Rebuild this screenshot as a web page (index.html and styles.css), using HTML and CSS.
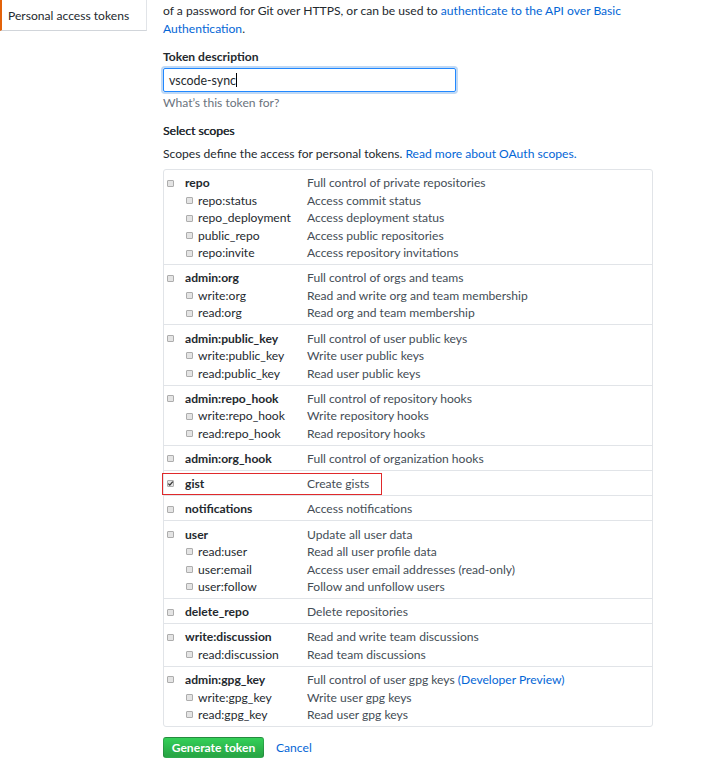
FILE: index.html
```html
<!DOCTYPE html>
<html>
<head>
<meta charset="utf-8">
<title>New personal access token</title>
<link rel="stylesheet" href="styles.css">
</head>
<body>
<div class="page">
  <nav class="sidebar">
    <a class="nav-item selected" href="#">Personal access tokens</a>
  </nav>
  <main class="main">
    <p class="intro">of a password for Git over HTTPS, or can be used to <a href="#">authenticate to the API over Basic<br>Authentication</a>.</p>

    <label class="field-label" for="desc">Token description</label>
    <div class="input"><span class="input-text">vscode-sync</span><span class="caret"></span></div>
    <p class="hint">What’s this token for?</p>

    <h3 class="field-label scopes-title">Select scopes</h3>
    <p class="scopes-note">Scopes define the access for personal tokens. <a href="#">Read more about OAuth scopes.</a></p>

    <div class="scopes">
      <div class="group">
        <div class="row top"><span class="name"><span class="cb"></span><b>repo</b></span><span class="desc">Full control of private repositories</span></div>
        <div class="row sub"><span class="name"><span class="cb"></span>repo:status</span><span class="desc">Access commit status</span></div>
        <div class="row sub"><span class="name"><span class="cb"></span>repo_deployment</span><span class="desc">Access deployment status</span></div>
        <div class="row sub"><span class="name"><span class="cb"></span>public_repo</span><span class="desc">Access public repositories</span></div>
        <div class="row sub"><span class="name"><span class="cb"></span>repo:invite</span><span class="desc">Access repository invitations</span></div>
      </div>
      <div class="group">
        <div class="row top"><span class="name"><span class="cb"></span><b>admin:org</b></span><span class="desc">Full control of orgs and teams</span></div>
        <div class="row sub"><span class="name"><span class="cb"></span>write:org</span><span class="desc">Read and write org and team membership</span></div>
        <div class="row sub"><span class="name"><span class="cb"></span>read:org</span><span class="desc">Read org and team membership</span></div>
      </div>
      <div class="group">
        <div class="row top"><span class="name"><span class="cb"></span><b>admin:public_key</b></span><span class="desc">Full control of user public keys</span></div>
        <div class="row sub"><span class="name"><span class="cb"></span>write:public_key</span><span class="desc">Write user public keys</span></div>
        <div class="row sub"><span class="name"><span class="cb"></span>read:public_key</span><span class="desc">Read user public keys</span></div>
      </div>
      <div class="group">
        <div class="row top"><span class="name"><span class="cb"></span><b>admin:repo_hook</b></span><span class="desc">Full control of repository hooks</span></div>
        <div class="row sub"><span class="name"><span class="cb"></span>write:repo_hook</span><span class="desc">Write repository hooks</span></div>
        <div class="row sub"><span class="name"><span class="cb"></span>read:repo_hook</span><span class="desc">Read repository hooks</span></div>
      </div>
      <div class="group">
        <div class="row top"><span class="name"><span class="cb"></span><b>admin:org_hook</b></span><span class="desc">Full control of organization hooks</span></div>
      </div>
      <div class="group highlighted">
        <span class="highlight-box"></span>
        <div class="row top"><span class="name"><span class="cb checked"><svg viewBox="0 0 7 7" width="7" height="7"><path d="M1.3 3.6 L2.8 5.1 L5.8 1.6" fill="none" stroke="#333" stroke-width="1.3"/></svg></span><b>gist</b></span><span class="desc">Create gists</span></div>
      </div>
      <div class="group">
        <div class="row top"><span class="name"><span class="cb"></span><b>notifications</b></span><span class="desc">Access notifications</span></div>
      </div>
      <div class="group">
        <div class="row top"><span class="name"><span class="cb"></span><b>user</b></span><span class="desc">Update all user data</span></div>
        <div class="row sub"><span class="name"><span class="cb"></span>read:user</span><span class="desc">Read all user profile data</span></div>
        <div class="row sub"><span class="name"><span class="cb"></span>user:email</span><span class="desc">Access user email addresses (read-only)</span></div>
        <div class="row sub"><span class="name"><span class="cb"></span>user:follow</span><span class="desc">Follow and unfollow users</span></div>
      </div>
      <div class="group">
        <div class="row top"><span class="name"><span class="cb"></span><b>delete_repo</b></span><span class="desc">Delete repositories</span></div>
      </div>
      <div class="group">
        <div class="row top"><span class="name"><span class="cb"></span><b>write:discussion</b></span><span class="desc">Read and write team discussions</span></div>
        <div class="row sub"><span class="name"><span class="cb"></span>read:discussion</span><span class="desc">Read team discussions</span></div>
      </div>
      <div class="group">
        <div class="row top"><span class="name"><span class="cb"></span><b>admin:gpg_key</b></span><span class="desc">Full control of user gpg keys <a href="#">(Developer Preview)</a></span></div>
        <div class="row sub"><span class="name"><span class="cb"></span>write:gpg_key</span><span class="desc">Write user gpg keys</span></div>
        <div class="row sub"><span class="name"><span class="cb"></span>read:gpg_key</span><span class="desc">Read user gpg keys</span></div>
      </div>
    </div>

    <div class="actions">
      <button class="btn-primary" type="button">Generate token</button>
      <a class="cancel" href="#">Cancel</a>
    </div>
  </main>
</div>
</body>
</html>
```
FILE: styles.css
```css
* { box-sizing: border-box; }
html, body { margin: 0; padding: 0; background: #fff; }
body {
  font-family: Lato, "Open Sans", sans-serif;
  font-size: 12.1px;
  color: #24292e;
}
a { color: #0366d6; text-decoration: none; }

.page { display: flex; gap: 16px; }

.sidebar { width: 147px; flex: none; }
.nav-item {
  display: block;
  padding: 7px 8px 5px 6px;
  line-height: 18px;
  color: #24292e;
  background: #fff;
  border-left: 2px solid #e36209;
  border-right: 1px solid #e1e4e8;
  border-bottom: 1px solid #d1d5da;
  height: 31px;
}

.main { width: 491px; flex: none; }

.intro { margin: 0; padding-top: 2px; line-height: 17.5px; }

.field-label { display: block; margin: 11px 0 0; line-height: 18px; font-weight: 700; font-size: 12.1px; }

.input {
  margin-top: 2px;
  width: 293px;
  height: 24px;
  border: 1px solid #2188ff;
  border-radius: 2px;
  box-shadow: 0 0 0 2px rgba(3, 102, 214, 0.25);
  display: flex;
  align-items: center;
  padding-left: 5px;
  color: #24292e;
  font-size: 12.4px;
}
.caret { width: 1px; height: 14px; background: #000; margin-left: 0; }

.hint { margin: 2px 0 0; line-height: 18px; color: #6a737d; }

.scopes-title { margin-top: 10px; font-weight: 400; color: #24292e; text-shadow: 0.3px 0 0 #24292e; }

.scopes-note { margin: 5px 0 0; line-height: 18px; }

.scopes {
  margin-top: 6px;
  border: 1px solid #e1e4e8;
  border-radius: 3px;
  width: 490px;
}
.group { padding: 4.3px 0 2.4px; position: relative; }
.group + .group { border-top: 1px solid #e1e4e8; }

.row { display: flex; align-items: center; line-height: 17.5px; }
.name { width: 143px; flex: none; display: flex; align-items: center; color: #24292e; }
.row.top .name { padding-left: 3px; gap: 11px; }
.row.sub .name { padding-left: 22px; gap: 5px; }
.name b { font-weight: 700; }
.desc { color: #444d56; }

.cb {
  width: 7px;
  height: 7px;
  flex: none;
  border: 1px solid #adadad;
  background: #e4e4e4;
  border-radius: 1px;
  display: block;
  position: relative;
}
.cb.checked svg { position: absolute; left: -1px; top: -1px; }

.highlight-box {
  position: absolute;
  left: -2px;
  top: 2px;
  width: 220px;
  height: 22px;
  border: 1px solid #e0292b;
  pointer-events: none;
}

.actions { margin-top: 10px; display: flex; align-items: center; gap: 12px; }
.btn-primary {
  font: 700 12.1px Lato, "Open Sans", sans-serif;
  color: #fff;
  height: 21px;
  width: 101px;
  padding: 0;
  border: 1px solid rgba(27, 31, 35, 0.2);
  border-radius: 3px;
  background: linear-gradient(180deg, #34d058 0%, #28a745 90%);
  line-height: 19px;
}
.cancel { line-height: 21px; }
```
